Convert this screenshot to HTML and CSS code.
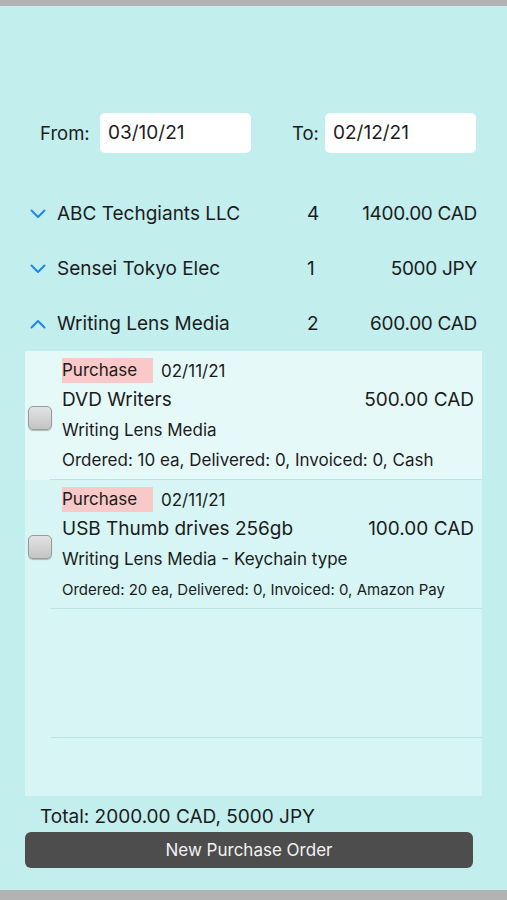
FILE: index.html
```html
<!DOCTYPE html>
<html lang="en">
<head>
    <meta charset="UTF-8">
    <title>Purchase Orders</title>
    <link rel="stylesheet" href="styles.css">
</head>
<body>
<div class="screen">

    <div class="dates">
        <label class="datelbl">From:</label>
        <div class="datebox">03/10/21</div>
        <label class="datelbl tolbl">To:</label>
        <div class="datebox">02/12/21</div>
    </div>

    <div class="vendors">
        <div class="vendor">
            <svg class="chev" viewBox="0 0 16 10"><path d="M1.5 1.5 L8 8 L14.5 1.5"/></svg>
            <span class="vname">ABC Techgiants LLC</span>
            <span class="vcount">4</span>
            <span class="vsum">1400.00 CAD</span>
        </div>
        <div class="vendor">
            <svg class="chev" viewBox="0 0 16 10"><path d="M1.5 1.5 L8 8 L14.5 1.5"/></svg>
            <span class="vname">Sensei Tokyo Elec</span>
            <span class="vcount">1</span>
            <span class="vsum">5000 JPY</span>
        </div>
        <div class="vendor">
            <svg class="chev" viewBox="0 0 16 10"><path d="M1.5 8.5 L8 2 L14.5 8.5"/></svg>
            <span class="vname">Writing Lens Media</span>
            <span class="vcount">2</span>
            <span class="vsum">600.00 CAD</span>
        </div>
    </div>

    <div class="orders">
        <div class="order first">
            <div class="check"></div>
            <div class="odata">
                <div class="ohead"><span class="tag">Purchase</span><span>02/11/21</span></div>
                <div class="oline"><span class="oname">DVD Writers</span><span>500.00 CAD</span></div>
                <div class="odesc">Writing Lens Media</div>
                <div class="ostat">Ordered: 10 ea, Delivered: 0, Invoiced: 0, Cash</div>
            </div>
        </div>
        <div class="order">
            <div class="check"></div>
            <div class="odata">
                <div class="ohead"><span class="tag">Purchase</span><span>02/11/21</span></div>
                <div class="oline"><span class="oname">USB Thumb drives 256gb</span><span>100.00 CAD</span></div>
                <div class="odesc">Writing Lens Media - Keychain type</div>
                <div class="ostat small">Ordered: 20 ea, Delivered: 0, Invoiced: 0, Amazon Pay</div>
            </div>
        </div>
        <div class="order empty"></div>
    </div>

    <div class="total">Total: 2000.00 CAD, 5000 JPY</div>
    <button class="newbtn">New Purchase Order</button>

</div>
</body>
</html>
```

FILE: styles.css
```css
html, body
{
    margin: 0;
    padding: 0;
}
body
{
    background: #b3b3b3;
    font-family: Inter, "Liberation Sans", sans-serif;
    color: #1c1c1c;
}
.screen
{
    margin-top: 6px;
    height: 884px;
    background: #c2eeed;
    padding: 107px 0 0 0;
    box-sizing: border-box;
}

.dates
{
    display: flex;
    align-items: center;
    padding-left: 40px;
    height: 40px;
}
.datelbl
{
    font-size: 18.5px;
    width: 60px;
}
.tolbl
{
    margin-left: 41px;
    width: 35px;
    margin-right: -2px;
}
.datebox
{
    background: white;
    width: 151px;
    height: 40px;
    border-radius: 5px;
    box-sizing: border-box;
    padding-left: 8px;
    line-height: 40px;
    font-size: 19px;
}

.vendors
{
    margin-top: 33px;
}
.vendor
{
    display: flex;
    align-items: center;
    height: 55px;
    padding-left: 30px;
    padding-right: 30px;
    font-size: 19px;
}
.chev
{
    width: 16px;
    height: 10px;
    margin-right: 11px;
}
.chev path
{
    fill: none;
    stroke: #1e86f0;
    stroke-width: 2;
    stroke-linecap: round;
    stroke-linejoin: round;
}
.vname
{
    width: 250px;
}
.vcount
{
    width: 20px;
}
.vsum
{
    flex: 1;
    text-align: right;
    letter-spacing: -0.3px;
}

.orders
{
    margin: 0 25px 0 25px;
    height: 445px;
    background: #d6f5f4;
}
.order
{
    display: flex;
    align-items: center;
    height: 129px;
    position: relative;
}
.order::after
{
    content: "";
    position: absolute;
    left: 25px;
    right: 0;
    bottom: 0;
    border-bottom: 1px solid #bfe3e3;
}
.order.first
{
    background: #e6f9f9;
}
.check
{
    width: 22px;
    height: 22px;
    margin: 4px 10px 0 3px;
    border-radius: 5px;
    border: 1px solid #9a9a9a;
    background: linear-gradient(#e2e2e2, #c4c4c4);
    box-shadow: 0 1px 1px rgba(0,0,0,0.25);
}
.odata
{
    flex: 1;
    align-self: flex-start;
    padding: 7px 8px 0 0;
}
.ohead
{
    display: flex;
    align-items: center;
    font-size: 17px;
    height: 25px;
}
.tag
{
    background: #f9c8c8;
    width: 91px;
    height: 25px;
    line-height: 25px;
    margin-right: 8px;
}
.oline
{
    display: flex;
    justify-content: space-between;
    font-size: 19px;
    line-height: 23px;
    margin-top: 5px;
}
.odesc
{
    font-size: 17px;
    line-height: 21px;
    margin-top: 9px;
}
.ostat
{
    font-size: 17px;
    line-height: 21px;
    margin-top: 9px;
}
.ostat.small
{
    font-size: 15px;
}

.total
{
    font-size: 19px;
    padding-left: 40px;
    margin-top: 9px;
}
.newbtn
{
    display: block;
    margin: 4px 0 0 25px;
    width: 448px;
    height: 36px;
    background: #4d4d4d;
    color: #f2f2f2;
    border: none;
    border-radius: 6px;
    font-family: Inter, "Liberation Sans", sans-serif;
    font-size: 17px;
}
```
